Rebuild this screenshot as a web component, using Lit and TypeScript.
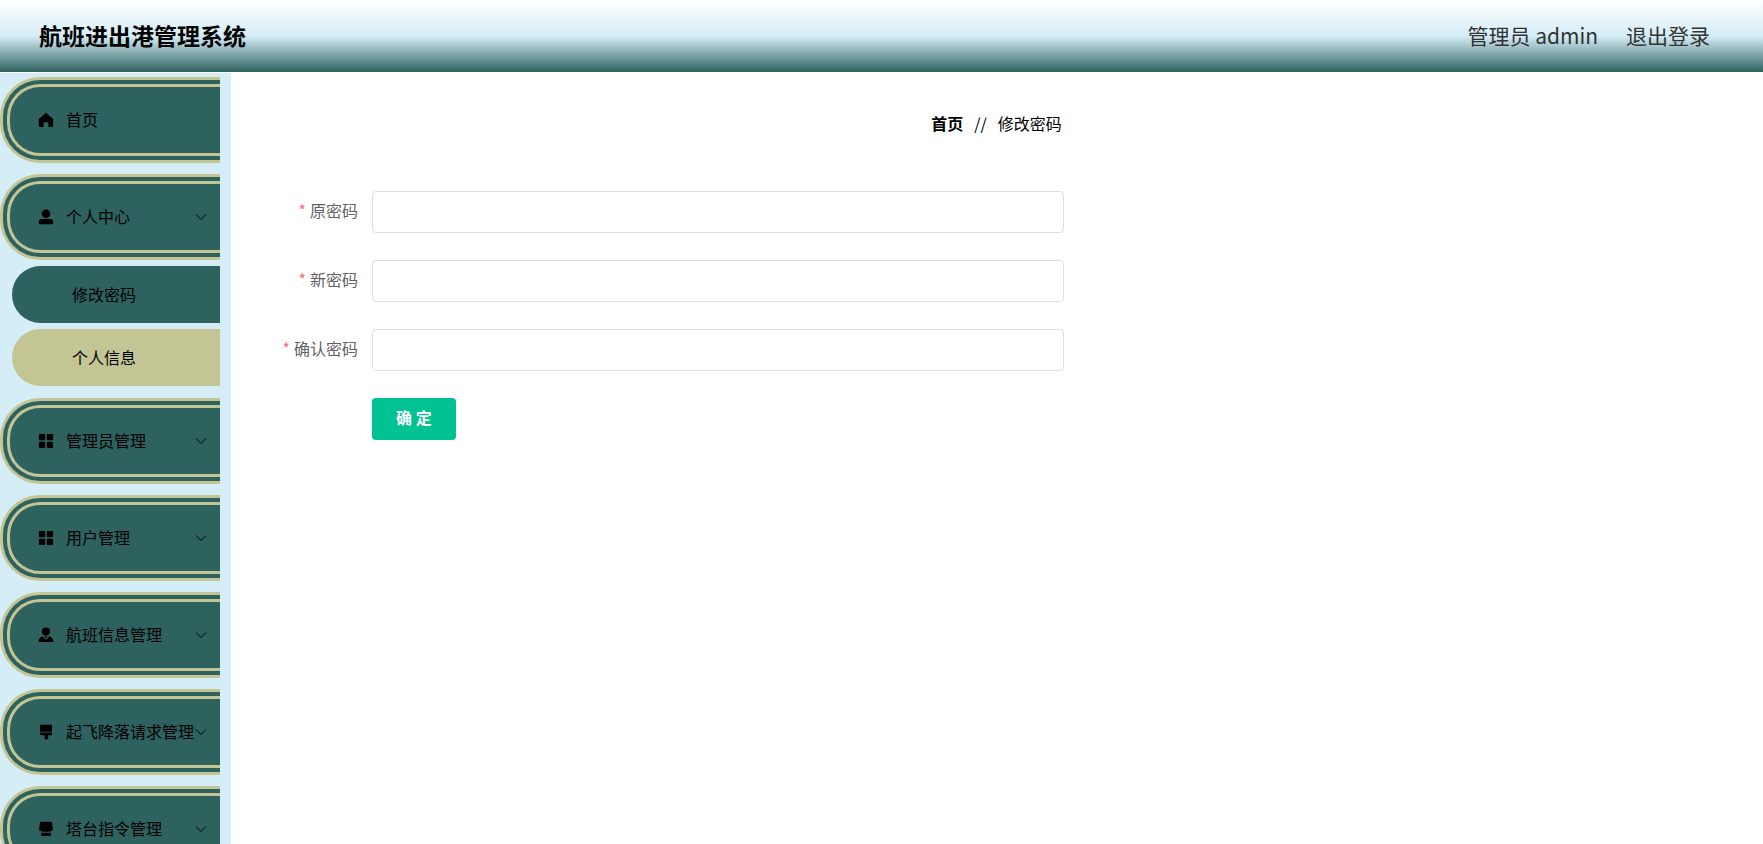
import { LitElement, html, svg, css } from "lit";
import { customElement, state } from "lit/decorators.js";

const icons: Record<string, unknown> = {
  home: svg`<path d="M8 .8 15.200 7V14a1 1 0 0 1-1 1H10.400V11.400a1.100 1.100 0 0 0-1.100-1.100H6.700a1.100 1.100 0 0 0-1.100 1.100V15H1.800a1 1 0 0 1-1-1V7Z"/>`,
  user: svg`<circle cx="8" cy="4.700" r="4.300"/><path d="M3.500 10h9A2.700 2.700 0 0 1 15.200 12.700v1.600a.9.9 0 0 1-.9.9H1.700a.9.9 0 0 1-.9-.9v-1.600A2.700 2.700 0 0 1 3.500 10Z"/>`,
  grid: svg`<rect x=".9" y=".9" width="6.300" height="6.300" rx="1"/><rect x="8.800" y=".9" width="6.300" height="6.300" rx="1"/><rect x=".9" y="8.800" width="6.300" height="6.300" rx="1"/><rect x="8.800" y="8.800" width="6.300" height="6.300" rx="1"/>`,
  custom: svg`<circle cx="8" cy="4.600" r="4.100"/><path d="M4.600 9.200 8 12.800 11.400 9.200c2.400.9 3.900 2.800 4.200 5.900H.4C.7 12 2.200 10.100 4.600 9.200Z"/><path d="M6.800 9.300h2.400L8.500 11h-1Z"/>`,
  brush: svg`<path d="M2 .8h12v7H2ZM2 8.600h12v1.600a1 1 0 0 1-1 1h-2.800v3.300a1 1 0 0 1-1 1H7.600a1 1 0 0 1-1-1v-3.300H3a1 1 0 0 1-1-1Z"/>`,
  shop: svg`<path d="M3 .8h10a1 1 0 0 1 1 .8l.9 6.400a2 2 0 0 1-1.900 2.100 2.400 2.400 0 0 1-2.500.5 2.600 2.600 0 0 1-2.500 0 2.600 2.600 0 0 1-2.500 0 2.400 2.400 0 0 1-2.500-.5A2 2 0 0 1 1.100 8L2 1.600a1 1 0 0 1 1-.8Z"/><path d="M3 11.600q1.300.6 2.500 0 1.300.7 2.500 0 1.300.7 2.500 0 1.200.6 2.500 0V14a1 1 0 0 1-1 1H4a1 1 0 0 1-1-1Z"/>`,
};

interface Item {
  label: string;
  icon: string;
  children?: string[];
}

const items: Item[] = [
  { label: "首页", icon: "home" },
  { label: "个人中心", icon: "user", children: ["修改密码", "个人信息"] },
  { label: "管理员管理", icon: "grid", children: [] },
  { label: "用户管理", icon: "grid", children: [] },
  { label: "航班信息管理", icon: "custom", children: [] },
  { label: "起飞降落请求管理", icon: "brush", children: [] },
  { label: "塔台指令管理", icon: "shop", children: [] },
];

const fields = [
  { id: "old-password", label: "原密码" },
  { id: "new-password", label: "新密码" },
  { id: "confirm-password", label: "确认密码" },
];

@customElement("app-root")
export class AppRoot extends LitElement {
  @state() private open = "个人中心";

  static styles = css`
    :host {
      display: flex;
      flex-direction: column;
      height: 100vh;
      overflow: hidden;
      background: #fff;
      color: #000;
      font: 16px/24px "Noto Sans CJK SC", sans-serif;
    }
    * {
      box-sizing: border-box;
    }
    button,
    input {
      font: inherit;
    }
    a {
      color: inherit;
      text-decoration: none;
    }
    .header {
      flex: none;
      display: flex;
      align-items: center;
      justify-content: space-between;
      height: 72px;
      padding: 0 53px 2px 39px;
      background: linear-gradient(#fff 0%, #d5edf7 50%, #2e625f 100%);
    }
    .title {
      margin: 0;
      font-size: 23px;
      line-height: 32px;
      font-weight: 700;
    }
    .account {
      display: flex;
      gap: 28px;
      font-size: 21px;
      line-height: 32px;
      color: #333;
    }
    .body {
      flex: 1;
      min-height: 0;
      display: flex;
      padding-top: 1px;
    }
    .sidebar {
      flex: none;
      width: 231px;
      padding: 4px 11px 0 0;
      overflow: hidden;
      background: #d5edf7;
    }
    .menu,
    .submenu {
      margin: 0;
      padding: 0;
      list-style: none;
    }
    .menu {
      display: grid;
      gap: 11px;
    }
    .item {
      display: flex;
      align-items: center;
      width: 100%;
      height: 86px;
      padding: 0 13px 0 28px;
      border: 10px double #c3c594;
      border-right: 0;
      border-radius: 40px 0 0 40px;
      background: #2e625f;
      color: #000;
      white-space: nowrap;
      cursor: pointer;
    }
    .text {
      padding-bottom: 2px;
    }
    .icon {
      flex: none;
      width: 16px;
      height: 16px;
      margin-right: 12px;
    }
    .arrow {
      flex: none;
      width: 12px;
      height: 12px;
      margin-left: auto;
      fill: none;
      stroke: #000;
    }
    .submenu {
      display: grid;
      gap: 6px;
      padding: 6px 0 1px 12px;
    }
    .sub {
      display: flex;
      align-items: center;
      height: 57px;
      padding: 0 0 2px 60px;
      border-radius: 40px 0 0 40px;
      background: #2e625f;
    }
    .light {
      background: #c3c594;
    }
    .main {
      flex: 1;
      min-width: 0;
      padding: 38px 24px;
    }
    .panel {
      width: 54.5%;
    }
    .crumbs {
      display: flex;
      justify-content: flex-end;
      gap: 11px;
      padding-right: 2px;
      margin-bottom: 56px;
    }
    .home {
      font-weight: 700;
    }
    .form {
      display: grid;
      gap: 27px;
    }
    .row {
      display: grid;
      grid-template-columns: 103px 1fr;
      column-gap: 14px;
    }
    .label {
      line-height: 38px;
      text-align: right;
      color: #606266;
    }
    .label::before {
      content: "*";
      margin-right: 4px;
      color: #f56c6c;
    }
    .field {
      width: 100%;
      height: 42px;
      padding: 0 15px;
      border: 1px solid #dcdfe6;
      border-radius: 4px;
      background: #fff;
      color: #606266;
      outline: none;
    }
    .submit {
      grid-column: 2;
      justify-self: start;
      height: 42px;
      padding: 0 24px 4px;
      border: 0;
      border-radius: 4px;
      background: #00c292;
      color: #fff;
      font-weight: 700;
      cursor: pointer;
    }
  `;

  private toggle(label: string) {
    this.open = this.open === label ? "" : label;
  }

  private renderItem(item: Item) {
    return html`<li>
      <button class="item" type="button" @click=${() => this.toggle(item.label)}>
        <svg class="icon" viewBox="0 0 16 16" aria-hidden="true">${icons[item.icon]}</svg>
        <span class="text">${item.label}</span>
        ${item.children
          ? html`<svg class="arrow" viewBox="0 0 12 12" aria-hidden="true"><path d="M1 3.500 6 8.500 11 3.500" /></svg>`
          : ""}
      </button>
      ${item.children?.length && this.open === item.label
        ? html`<ul class="submenu">
            ${item.children.map(
              (child, i) => html`<li><a class="sub ${i === 1 ? "light" : ""}" href="#">${child}</a></li>`
            )}
          </ul>`
        : ""}
    </li>`;
  }

  render() {
    return html`
      <header class="header">
        <h1 class="title">航班进出港管理系统</h1>
        <div class="account"><span>管理员 admin</span><a href="#">退出登录</a></div>
      </header>
      <div class="body">
        <nav class="sidebar">
          <ul class="menu">
            ${items.map((item) => this.renderItem(item))}
          </ul>
        </nav>
        <main class="main">
          <div class="panel">
            <nav class="crumbs"><a class="home" href="#">首页</a><span>//</span><span>修改密码</span></nav>
            <form class="form" @submit=${(e: Event) => e.preventDefault()}>
              ${fields.map(
                (f) => html`<div class="row">
                  <label class="label" for=${f.id}>${f.label}</label>
                  <input class="field" id=${f.id} type="password" />
                </div>`
              )}
              <div class="row"><button class="submit" type="submit">确 定</button></div>
            </form>
          </div>
        </main>
      </div>
    `;
  }
}
